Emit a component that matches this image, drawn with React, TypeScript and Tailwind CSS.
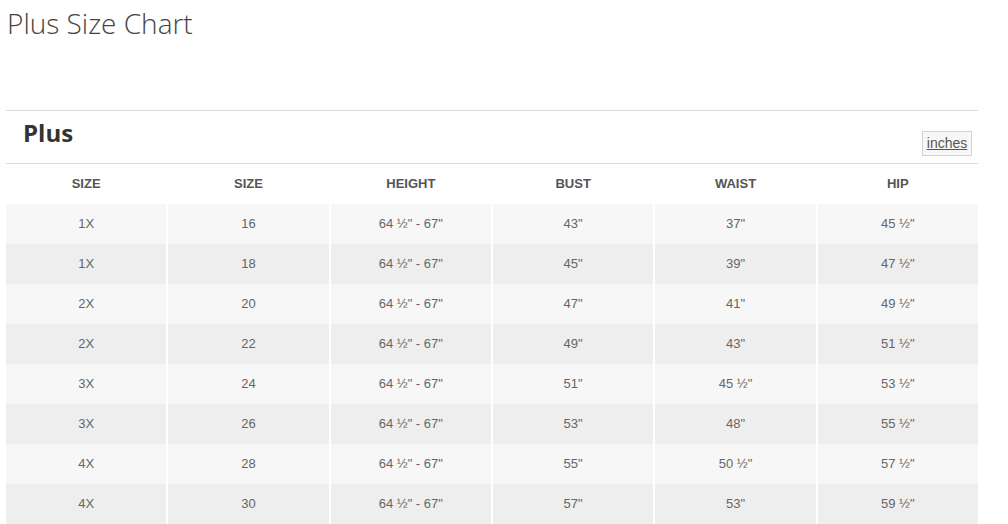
const headers = ["SIZE", "SIZE", "HEIGHT", "BUST", "WAIST", "HIP"];

const rows: string[][] = [
  ["1X", "16", "64 ½\" - 67\"", "43\"", "37\"", "45 ½\""],
  ["1X", "18", "64 ½\" - 67\"", "45\"", "39\"", "47 ½\""],
  ["2X", "20", "64 ½\" - 67\"", "47\"", "41\"", "49 ½\""],
  ["2X", "22", "64 ½\" - 67\"", "49\"", "43\"", "51 ½\""],
  ["3X", "24", "64 ½\" - 67\"", "51\"", "45 ½\"", "53 ½\""],
  ["3X", "26", "64 ½\" - 67\"", "53\"", "48\"", "55 ½\""],
  ["4X", "28", "64 ½\" - 67\"", "55\"", "50 ½\"", "57 ½\""],
  ["4X", "30", "64 ½\" - 67\"", "57\"", "53\"", "59 ½\""],
];

export default function App() {
  return (
    <div className="h-[524px] w-[1008px] overflow-hidden bg-white">
      <div className="h-[110px] pl-[7px] pt-[2px]">
        <h1 className="font-['Open_Sans',sans-serif] text-[28px] font-light text-[#444]">
          Plus Size Chart
        </h1>
      </div>

      <div className="ml-[6px] w-[972px]">
        {/* section header */}
        <div className="flex h-[54px] items-start justify-between border-y border-[#dcdcdc]">
          <h2 className="pl-[17px] pt-[4px] font-['Open_Sans',sans-serif] text-[24px] font-bold text-[#333]">
            Plus
          </h2>
          <button
            type="button"
            className="mr-[6px] mt-[20px] h-[25px] w-[50px] border border-[#d4d4d4] bg-[#f7f7f7] font-['Liberation_Sans',Arial,sans-serif] text-[14px] text-[#555] underline"
          >
            inches
          </button>
        </div>

        {/* table */}
        <div className="grid grid-cols-6 gap-x-[2px] font-['Liberation_Sans',Arial,sans-serif] text-[13px] text-[#666]">
          {headers.map((h, i) => (
            <div key={i} className="flex h-[40px] items-center justify-center font-bold text-[#555]">
              {h}
            </div>
          ))}
          {rows.map((r, ri) =>
            r.map((c, ci) => (
              <div
                key={`${ri}-${ci}`}
                className={`flex h-[40px] items-center justify-center ${ri % 2 === 0 ? "bg-[#f7f7f7]" : "bg-[#eeeeee]"}`}
              >
                {c}
              </div>
            ))
          )}
        </div>
      </div>
    </div>
  );
}
